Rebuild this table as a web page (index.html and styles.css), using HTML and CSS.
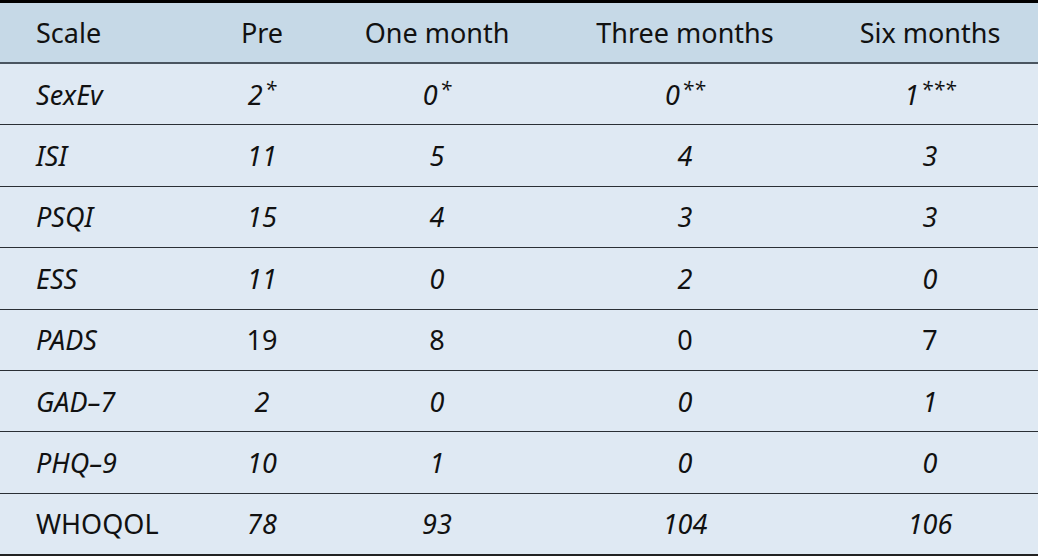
FILE: index.html
```html
<!DOCTYPE html>
<html lang="en">
<head>
  <meta charset="UTF-8">
  <meta name="viewport" content="width=device-width, initial-scale=1.0">
  <title>Scale scores</title>
  <link rel="stylesheet" href="styles.css">
</head>
<body>
  <table class="scores">
    <colgroup>
      <col class="col-scale">
      <col class="col-pre">
      <col class="col-one">
      <col class="col-three">
      <col class="col-six">
    </colgroup>
    <thead>
      <tr>
        <th class="name">Scale</th>
        <th>Pre</th>
        <th>One month</th>
        <th>Three months</th>
        <th>Six months</th>
      </tr>
    </thead>
    <tbody>
      <tr>
        <td class="name it">SexEv</td>
        <td class="it">2<sup>*</sup></td>
        <td class="it">0<sup>*</sup></td>
        <td class="it">0<sup>**</sup></td>
        <td class="it">1<sup>***</sup></td>
      </tr>
      <tr>
        <td class="name it">ISI</td>
        <td class="it">11</td>
        <td class="it">5</td>
        <td class="it">4</td>
        <td class="it">3</td>
      </tr>
      <tr>
        <td class="name it">PSQI</td>
        <td class="it">15</td>
        <td class="it">4</td>
        <td class="it">3</td>
        <td class="it">3</td>
      </tr>
      <tr>
        <td class="name it">ESS</td>
        <td class="it">11</td>
        <td class="it">0</td>
        <td class="it">2</td>
        <td class="it">0</td>
      </tr>
      <tr>
        <td class="name it">PADS</td>
        <td>19</td>
        <td>8</td>
        <td>0</td>
        <td>7</td>
      </tr>
      <tr>
        <td class="name it">GAD&ndash;7</td>
        <td class="it">2</td>
        <td class="it">0</td>
        <td class="it">0</td>
        <td class="it">1</td>
      </tr>
      <tr>
        <td class="name it">PHQ&ndash;9</td>
        <td class="it">10</td>
        <td class="it">1</td>
        <td class="it">0</td>
        <td class="it">0</td>
      </tr>
      <tr>
        <td class="name">WHOQOL</td>
        <td class="it">78</td>
        <td class="it">93</td>
        <td class="it">104</td>
        <td class="it">106</td>
      </tr>
    </tbody>
  </table>
</body>
</html>
```

FILE: styles.css
```css
body {
  margin: 0;
  padding: 0;
  font-family: 'Noto Sans', 'Open Sans', sans-serif;
  background-color: #ffffff;
  color: #111;
}

.scores {
  width: 1038px;
  border-collapse: collapse;
  table-layout: fixed;
  font-size: 27px;
  border-top: 3px solid #000;
  border-bottom: 2px solid #222;
}

.col-scale { width: 198px; }
.col-pre { width: 128px; }
.col-one { width: 222px; }
.col-three { width: 274px; }
.col-six { width: 216px; }

.scores th {
  background-color: #c6d9e7;
  font-weight: normal;
  height: 59px;
  padding: 0;
  text-align: center;
  border-bottom: 2px solid #4a5560;
}

.scores td {
  background-color: #dfe9f3;
  height: 60.4px;
  padding: 0;
  text-align: center;
  border-bottom: 1.5px solid #2a2f35;
}

.scores .name {
  text-align: left;
  padding-left: 36px;
}

.it {
  font-style: italic;
}

sup {
  font-size: 21px;
  line-height: 0;
  vertical-align: 8px;
  margin-left: 2px;
}
```
